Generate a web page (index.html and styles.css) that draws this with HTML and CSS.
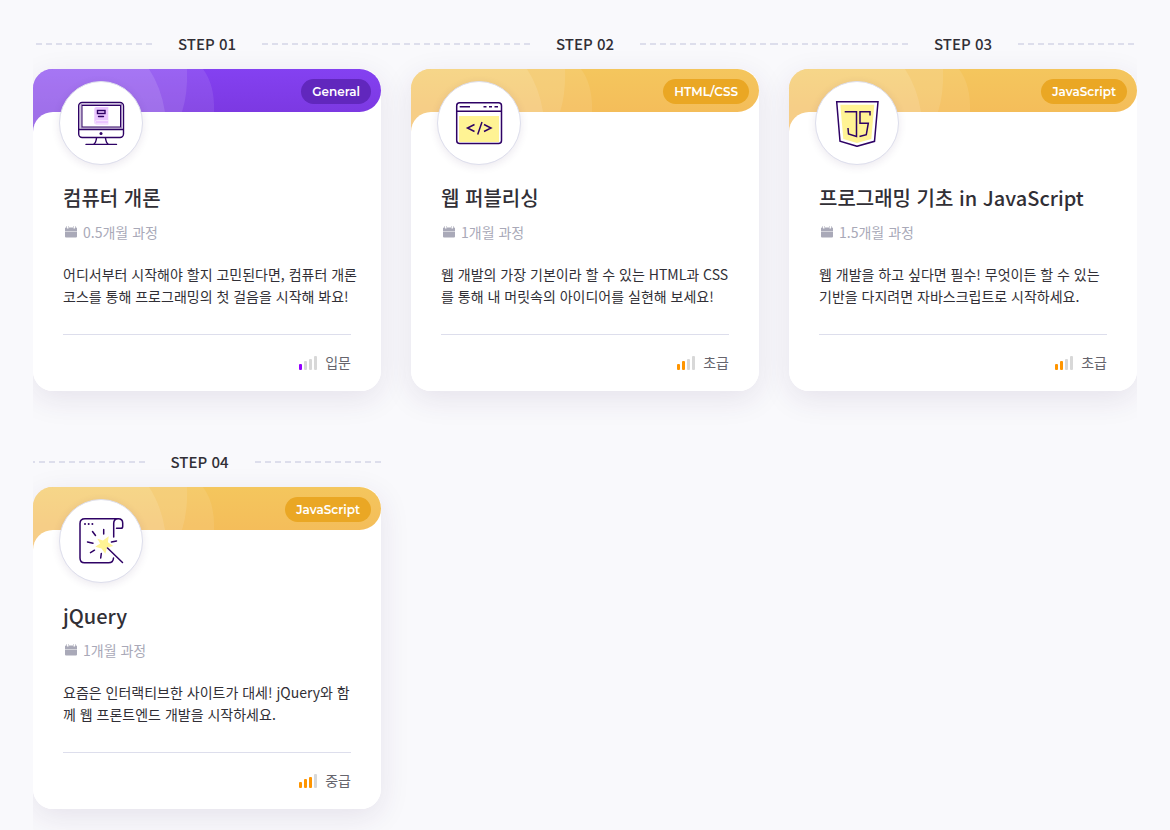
FILE: index.html
```html
<!DOCTYPE html>
<html lang="ko">
<head>
<meta charset="utf-8">
<meta name="viewport" content="width=device-width, initial-scale=1">
<title>학습 코스</title>
<link rel="stylesheet" href="styles.css">
</head>
<body>
<svg class="sprite" aria-hidden="true">
  <symbol id="rings" viewBox="0 0 182 63">
    <path d="M0 0H116Q128 18 132 43H20V63H0Z" fill="#fff" fill-opacity=".12"/>
    <path d="M0 0H154Q155 24 149 43H20V63H0Z" fill="#fff" fill-opacity=".1"/>
    <path d="M0 0H170Q182 16 181 43H20V63H0Z" fill="#fff" fill-opacity=".09"/>
  </symbol>
  <symbol id="calendar" viewBox="0 0 12 12">
    <path d="M0 5V2.500Q0 1.500 1 1.500H1.500V0H2V2.500H3.500V0H4V1.500H8V0H8.500V2.500H10V0H10.500V1.500H11Q12 1.500 12 2.500V5ZM0 5.600H12V10.500Q12 11.500 11 11.500H1Q0 11.500 0 10.500Z"/>
  </symbol>
</svg>
<main class="roadmap">
  <ol class="steps">
    <li class="step">
      <h2 class="step-label">STEP 01</h2>
      <a class="card card-general" href="#computer">
        <div class="card-head"><svg class="rings"><use href="#rings"/></svg><span class="badge">General</span></div>
        <div class="card-body">
          <div class="emblem">
            <svg class="emblem-icon" viewBox="0 0 48 48" aria-hidden="true">
              <path d="M17.300 10Q17.300 8 19.300 8H31.300V25.600H19.300Q17.300 25.600 17.300 23.600Z" fill="#eac5ff"/>
              <path d="M31 21.600H19.500Q18 21.800 18 23.200T19.500 24.800H31" fill="none" stroke="#f8e8ff"/>
              <rect x="4" y="5.500" width="40.500" height="23.500" fill="none" stroke="#a58bc0" stroke-width="1"/>
              <g fill="none" stroke="#2e0265" stroke-width="1.400" stroke-linecap="round">
                <rect x="1.700" y="3.500" width="44.800" height="35" rx="3.500"/>
                <rect x="5" y="6.500" width="38.500" height="21.500" stroke-width="1"/>
                <path d="M2 30.500H46M19.500 39Q19 44 16.500 45.300M28.500 39Q29 44 31.500 45.300M9 45.400H39.500"/>
                <rect x="20.500" y="11.500" width="7.500" height="3"/>
                <path d="M21.500 17.500H26.500"/>
              </g>
              <circle cx="24" cy="34.500" r="1.500" fill="#2e0265"/>
            </svg>
          </div>
          <h3 class="title">컴퓨터 개론</h3>
          <p class="period"><svg class="calendar" aria-hidden="true"><use href="#calendar"/></svg>0.5개월 과정</p>
          <p class="summary">어디서부터 시작해야 할지 고민된다면, 컴퓨터 개론 코스를 통해 프로그래밍의 첫 걸음을 시작해 봐요!</p>
          <div class="level"><span class="bars"><i class="bar on"></i><i class="bar"></i><i class="bar"></i><i class="bar"></i></span>입문</div>
        </div>
      </a>
    </li>
    <li class="step">
      <h2 class="step-label">STEP 02</h2>
      <a class="card" href="#publishing">
        <div class="card-head"><svg class="rings"><use href="#rings"/></svg><span class="badge">HTML/CSS</span></div>
        <div class="card-body">
          <div class="emblem">
            <svg class="emblem-icon" viewBox="0 0 48 48" aria-hidden="true">
              <rect x="4" y="17" width="40" height="26" fill="#fff394"/>
              <g fill="none" stroke="#2e0265" stroke-width="1.500">
                <rect x="1.700" y="3.700" width="44.800" height="40.800" rx="3"/>
                <path d="M2 12.200H46M4.700 7.800H15M28.500 7.800H31.500M34 7.800H37M39.500 7.800H43M19.500 25.500L12.500 29L19.500 32.500M27 23L22.700 35.500M29 25.500L36 29L29 32.500"/>
              </g>
            </svg>
          </div>
          <h3 class="title">웹 퍼블리싱</h3>
          <p class="period"><svg class="calendar" aria-hidden="true"><use href="#calendar"/></svg>1개월 과정</p>
          <p class="summary">웹 개발의 가장 기본이라 할 수 있는 HTML과 CSS를 통해 내 머릿속의 아이디어를 실현해 보세요!</p>
          <div class="level"><span class="bars"><i class="bar on"></i><i class="bar on"></i><i class="bar"></i><i class="bar"></i></span>초급</div>
        </div>
      </a>
    </li>
    <li class="step">
      <h2 class="step-label">STEP 03</h2>
      <a class="card" href="#javascript">
        <div class="card-head"><svg class="rings"><use href="#rings"/></svg><span class="badge">JavaScript</span></div>
        <div class="card-body">
          <div class="emblem">
            <svg class="emblem-icon" viewBox="0 0 48 48" aria-hidden="true">
              <path d="M7.300 5.700H41.300L38.300 40L24 44L10.300 40Z" fill="#fff394"/>
              <g fill="none" stroke="#2e0265" stroke-width="1.500">
                <path d="M3.700 2.700H45L41.500 42.300L24 47.300L7 42.300Z"/>
                <path d="M11.700 12.700H23.500V37.500L15.500 35L15 29M37 16.500V12.700H27V24.200H35.300L33.300 35.700L26.500 37.500"/>
              </g>
            </svg>
          </div>
          <h3 class="title">프로그래밍 기초 in JavaScript</h3>
          <p class="period"><svg class="calendar" aria-hidden="true"><use href="#calendar"/></svg>1.5개월 과정</p>
          <p class="summary">웹 개발을 하고 싶다면 필수! 무엇이든 할 수 있는 기반을 다지려면 자바스크립트로 시작하세요.</p>
          <div class="level"><span class="bars"><i class="bar on"></i><i class="bar on"></i><i class="bar"></i><i class="bar"></i></span>초급</div>
        </div>
      </a>
    </li>
    <li class="step step-last">
      <h2 class="step-label">STEP 04</h2>
      <a class="card" href="#jquery">
        <div class="card-head"><svg class="rings"><use href="#rings"/></svg><span class="badge">JavaScript</span></div>
        <div class="card-body">
          <div class="emblem">
            <svg class="emblem-icon" viewBox="0 0 48 48" aria-hidden="true">
              <path d="M31.700 19.300L30.900 25.200L36.300 29L30 30.500L28.300 36.700L24.500 31.500L18.300 29.700L23.200 26.500L20.300 21.700L26 23.500Z" fill="#fff394"/>
              <g fill="none" stroke="#2e0265" stroke-width="1.500" stroke-linecap="round">
                <path d="M36.700 20V6.500Q36.700 1.700 41.300 1.700Q45.700 1.700 45.700 6V9.500Q45.700 11.300 44 11.300H39.500M41.300 1.700H8Q3 1.700 3 6.500V41Q3 45.800 7.500 45.800H31.500Q36.300 45.800 36.500 41"/>
                <path d="M26.700 12.500V17M15.500 14.500L18.500 18.500M10.500 25L16 26.200M13.500 35.700L17.500 33.200M24.300 36.500L23.700 41M34.500 25L39.500 24M30.500 31L45.500 45.500"/>
              </g>
              <g fill="#2e0265"><circle cx="8" cy="7" r="1"/><circle cx="11.700" cy="7" r="1"/><circle cx="15.400" cy="7" r="1"/></g>
            </svg>
          </div>
          <h3 class="title">jQuery</h3>
          <p class="period"><svg class="calendar" aria-hidden="true"><use href="#calendar"/></svg>1개월 과정</p>
          <p class="summary">요즘은 인터랙티브한 사이트가 대세! jQuery와 함께 웹 프론트엔드 개발을 시작하세요.</p>
          <div class="level"><span class="bars"><i class="bar on"></i><i class="bar on"></i><i class="bar on"></i><i class="bar"></i></span>중급</div>
        </div>
      </a>
    </li>
  </ol>
</main>
</body>
</html>
```
FILE: styles.css
```css
* {
  box-sizing: border-box;
}

body {
  margin: 0;
  background: #f9f9fc;
  color: #312f36;
  font-family: "Noto Sans CJK KR", "Noto Sans", sans-serif;
}

h2, h3, p, ol {
  margin: 0;
  padding: 0;
}

.sprite {
  position: absolute;
  width: 0;
  height: 0;
}

.roadmap {
  margin: 0 33px;
  padding: 32px 0 21px;
  overflow: hidden;
}

.steps {
  display: grid;
  grid-template-columns: repeat(auto-fill, minmax(320px, 1fr));
  gap: 59px 30px;
  list-style: none;
}

.step-label {
  display: flex;
  align-items: center;
  gap: 26px;
  margin: 0 -15px 13px;
  font-size: 15px;
  font-weight: 500;
  line-height: 24px;
}

.step-last .step-label {
  margin-right: 0;
}

.step-label::before,
.step-label::after {
  content: "";
  flex: 1;
  height: 2px;
  background: repeating-linear-gradient(90deg, #dddeec 0 6px, transparent 6px 10px);
}

.step-label::before {
  background: repeating-linear-gradient(270deg, #dddeec 0 6px, transparent 6px 10px);
}

.card {
  --band-top: #f4c65d;
  --band-bottom: #f4bd5a;
  --band-tail: #f5b95f;
  --badge: #eaa724;
  --accent: #ff9500;
  display: block;
  border-radius: 20px;
  background: #fff;
  box-shadow: 0 8px 30px rgba(60, 30, 90, 0.1);
  color: inherit;
  text-decoration: none;
}

.card-general {
  --band-top: #8441f1;
  --band-bottom: #7c39e2;
  --band-tail: #7c3ae0;
  --badge: #6127bd;
  --accent: #9500ff;
}

.card-head {
  position: relative;
  display: flex;
  justify-content: flex-end;
  height: 43px;
  padding: 10px;
  border-radius: 20px 22px 22px 0;
  background: linear-gradient(var(--band-top), var(--band-bottom));
}

.card-head::before {
  content: "";
  position: absolute;
  top: 100%;
  left: 0;
  width: 20px;
  height: 20px;
  background: linear-gradient(var(--band-bottom), var(--band-tail));
}

.rings {
  position: absolute;
  top: 0;
  left: 0;
  width: 182px;
  height: 63px;
  border-top-left-radius: 20px;
}

.badge {
  height: 25px;
  padding: 0 11px;
  border-radius: 13px;
  background: var(--badge);
  color: #fff;
  font-family: Montserrat, Inter, sans-serif;
  font-size: 12px;
  font-weight: 600;
  line-height: 25px;
}

.card-body {
  position: relative;
  display: flex;
  flex-direction: column;
  padding: 0 30px 17px;
  border-radius: 20px 0 20px 20px;
  background: #fff;
}

.emblem {
  display: flex;
  align-items: center;
  justify-content: center;
  width: 84px;
  height: 84px;
  margin: -31px 0 18px -4px;
  border: 1px solid #dddeec;
  border-radius: 50%;
  background: #fff;
  box-shadow: 0 2px 8px rgba(60, 30, 90, 0.1);
}

.emblem-icon {
  width: 48px;
  height: 48px;
}

.title {
  font-size: 20px;
  font-weight: 500;
  line-height: 30px;
}

.period {
  display: flex;
  align-items: center;
  gap: 6px;
  margin-top: 9px;
  padding-left: 2px;
  color: #a9a9b8;
  font-size: 14px;
  line-height: 20px;
}

.calendar {
  width: 12px;
  height: 12px;
  fill: currentColor;
}

.summary {
  margin: 21px -8px 0 0;
  font-size: 14px;
  line-height: 22px;
}

.level {
  display: flex;
  align-items: center;
  justify-content: flex-end;
  gap: 8px;
  margin-top: 27px;
  padding-top: 15px;
  border-top: 1px solid #dddeec;
  color: #66646c;
  font-size: 14px;
  line-height: 24px;
}

.bars {
  display: flex;
  align-items: flex-end;
  gap: 2px;
  padding-top: 2px;
}

.bar {
  width: 3px;
  height: 6px;
  border-radius: 1px;
  background: #d8d8d8;
}

.bar:nth-child(2) { height: 9px; }
.bar:nth-child(3) { height: 11px; }
.bar:nth-child(4) { height: 14px; }

.bar.on {
  background: var(--accent);
}
```
